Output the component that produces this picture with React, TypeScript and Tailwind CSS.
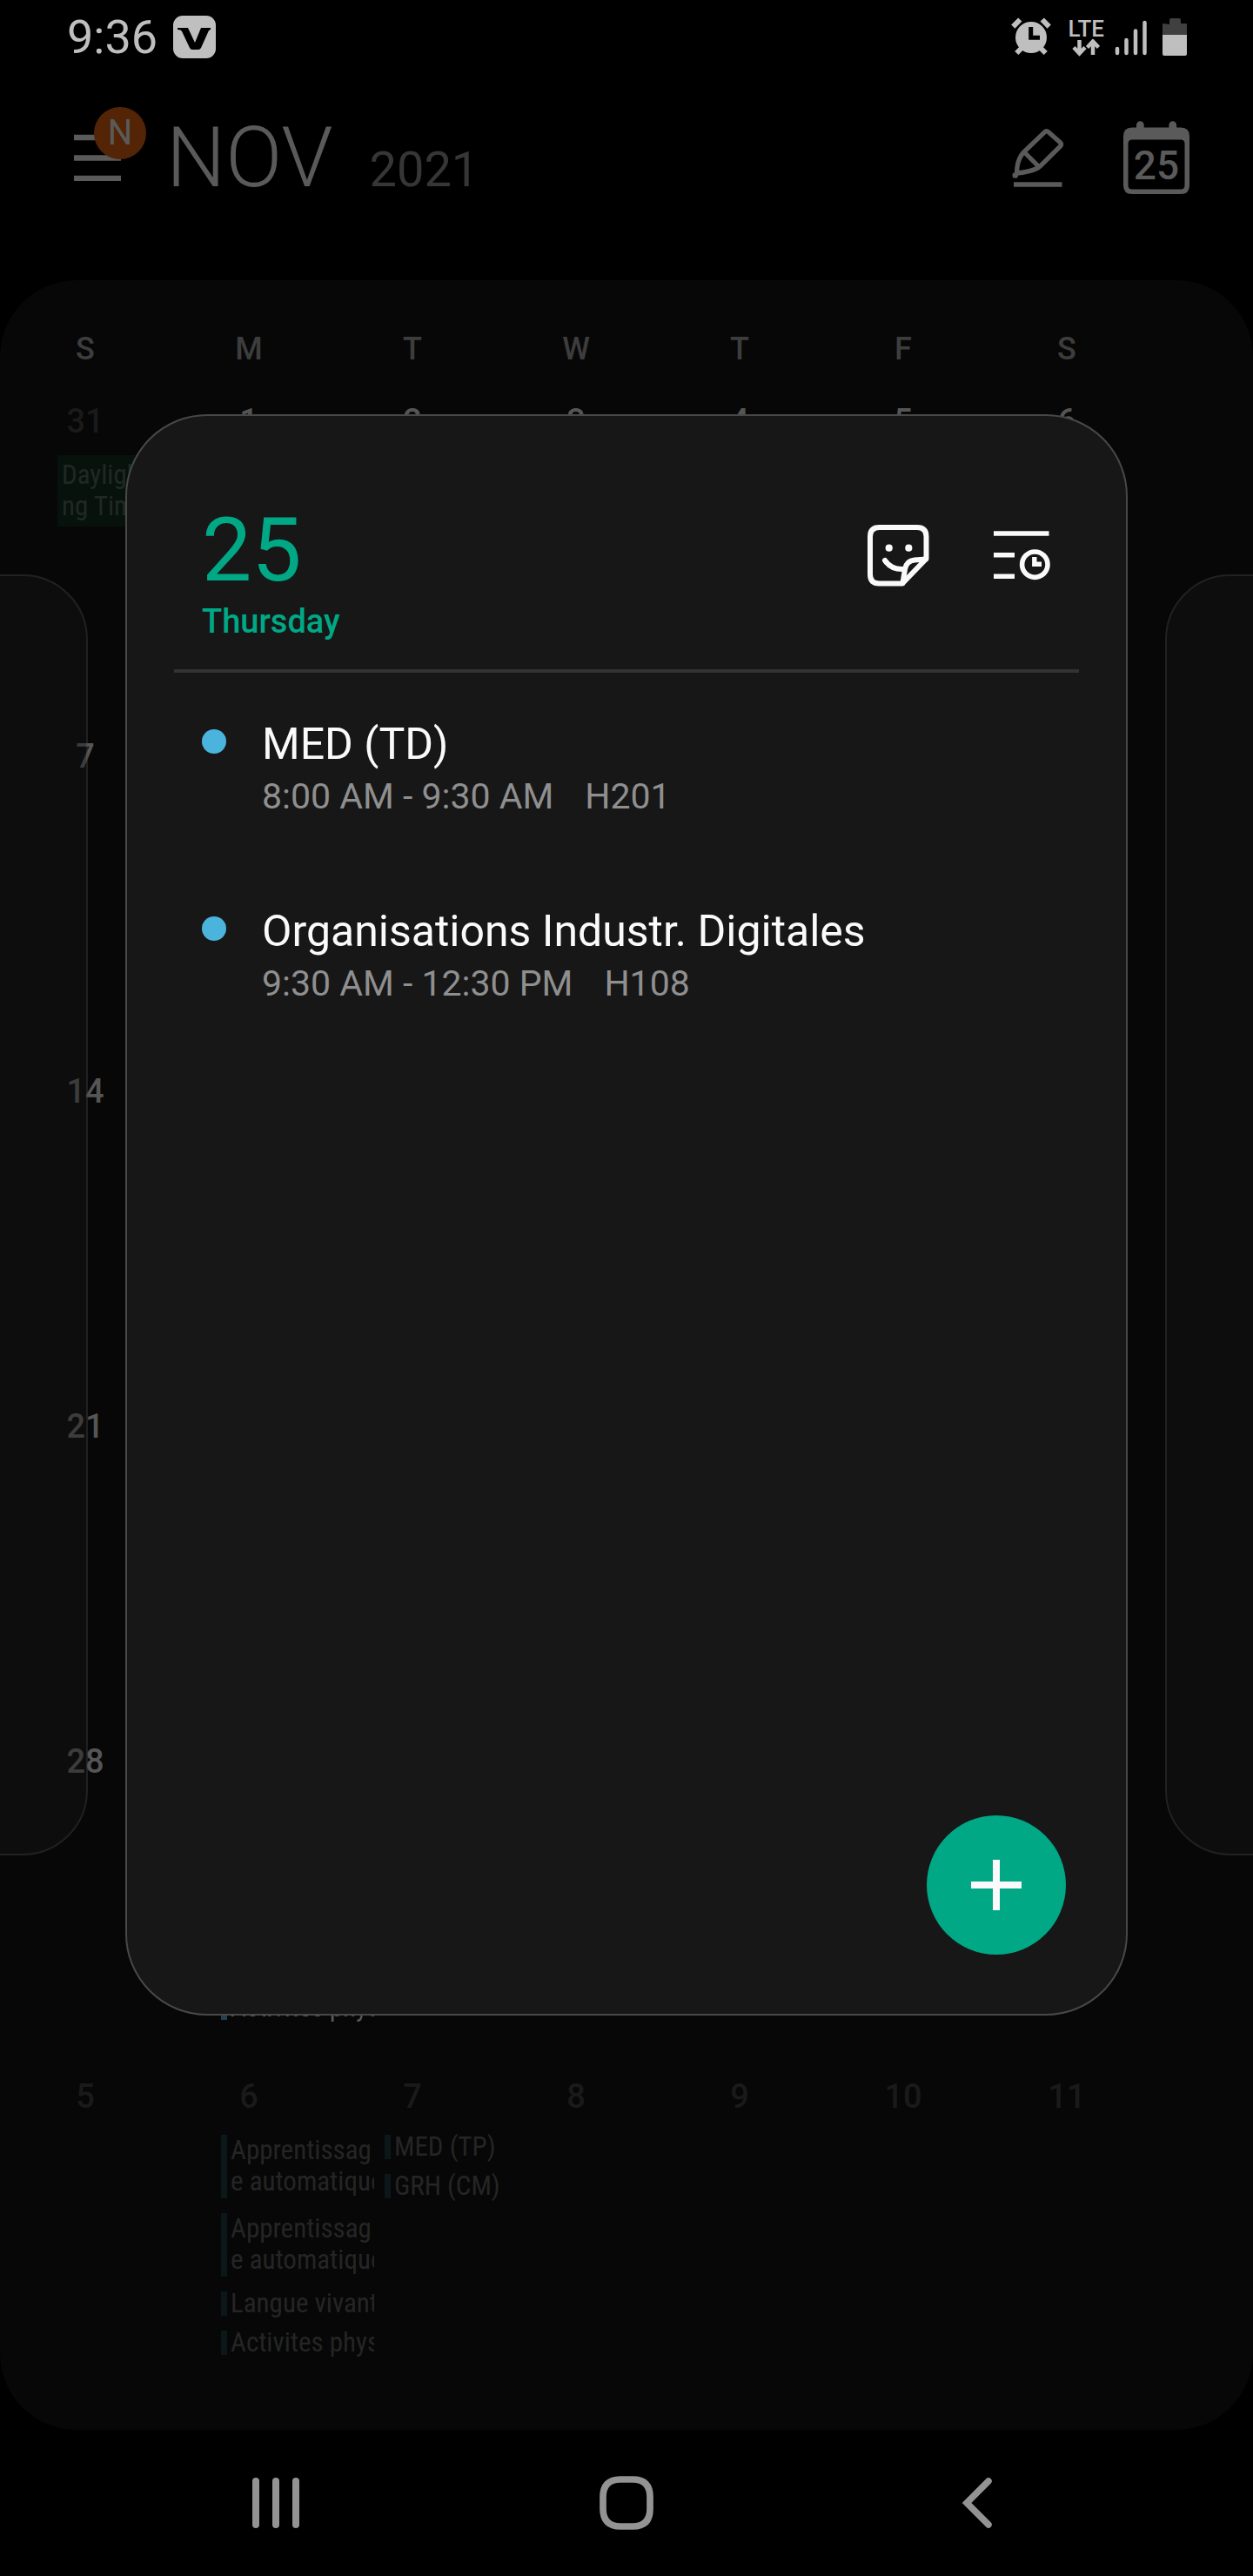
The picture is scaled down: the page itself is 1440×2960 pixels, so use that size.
type CalEvent = { lines: string[]; allDay?: boolean };
type Day = { date: number; outside?: boolean; events?: CalEvent[] };

const weekdays = ["S", "M", "T", "W", "T", "F", "S"];

const mondayEvents: CalEvent[] = [
  { lines: ["Apprentissag", "e automatique"] },
  { lines: ["Apprentissag", "e automatique"] },
  { lines: ["Langue vivante"] },
  { lines: ["Activites physiques"] },
];

const eventsByCell: Record<number, CalEvent[]> = {
  0: [{ lines: ["Daylight Savi", "ng Time ends"], allDay: true }],
  29: mondayEvents,
  36: mondayEvents,
  37: [{ lines: ["MED (TP)"] }, { lines: ["GRH (CM)"] }],
};

const weeks: Day[][] = Array.from({ length: 6 }, (_, w) =>
  Array.from({ length: 7 }, (_, d) => {
    const cell = w * 7 + d;
    const date = cell === 0 ? 31 : cell > 30 ? cell - 30 : cell;
    return { date, outside: cell === 0 || cell > 30, events: eventsByCell[cell] };
  }),
);

const agenda = [
  { title: "MED (TD)", time: "8:00 AM - 9:30 AM", place: "H201" },
  { title: "Organisations Industr. Digitales", time: "9:30 AM - 12:30 PM", place: "H108" },
];

function StatusBar() {
  return (
    <div className="flex h-[86px] items-center justify-between pl-[77px] pr-[75px] text-[#bfbfbf]">
      <div className="flex items-center gap-[18px]">
        <span className="text-[54px] leading-none">9:36</span>
        <svg width="50" height="50" viewBox="0 0 50 50" aria-label="V notification">
          <rect width="49" height="49" rx="11" fill="currentColor" />
          <path d="M5 14h12l8 17 7-17h11v2l-2 1-9 20q-1 2-3 2h-7q-2 0-3-2L10 18q-1-2-5-2z" fill="#000" />
        </svg>
      </div>
      <div className="flex items-center">
        <svg width="46" height="46" viewBox="0 0 46 46" fill="none" stroke="currentColor" aria-label="Alarm set">
          <path d="M2.3 10.7l8-8.2M35.7 2.5l8 8.2M6.3 41l7-7M39.7 41l-7-7" strokeWidth="6" />
          <circle cx="23" cy="23" r="18" fill="currentColor" stroke="none" />
          <path d="M22.7 11v12.2H33" stroke="#000" strokeWidth="5" />
        </svg>
        <div className="ml-5 flex flex-col items-center">
          <span className="text-[26px] font-medium leading-6">LTE</span>
          <svg width="32" height="20" viewBox="0 0 32 20" fill="none" stroke="currentColor" strokeWidth="4.5">
            <path d="M8.5 1v16M2 9.500l6.500 7L15 9.500" />
            <path d="M24 18V3M17.500 9.500L24 2.500l6.500 7" />
          </svg>
        </div>
        <svg className="ml-3" width="38" height="42" viewBox="0 0 38 42" stroke="currentColor" strokeWidth="4.500" strokeLinecap="round" aria-label="Signal">
          <path d="M3 34v5M13.500 24v15M24 13.500v25.500M34.500 4v35" />
        </svg>
        <svg className="ml-4" width="30" height="44" viewBox="0 0 30 44" aria-label="Battery">
          <path d="M9 7V2q0-2 2-2h9q2 0 2 2v4h6q1 0 1 1v12H1V7q0-1 1-1z" fill="#404040" />
          <path d="M1 19h28v22q0 2-2 2H3q-2 0-2-2z" fill="currentColor" />
        </svg>
      </div>
    </div>
  );
}

function AppBar() {
  return (
    <header className="mb-[46px] flex h-[190px] items-center justify-between pl-[85px] pr-[73px] text-[#5a5a5a]">
      <div className="flex items-center">
        <button type="button" aria-label="Menu" className="relative w-[54px]">
          <svg width="54" height="54" viewBox="0 0 54 54" className="block">
            <path d="M0 4h54M0 27.500h54M0 51h54" stroke="currentColor" strokeWidth="6.500" />
          </svg>
          <span className="absolute -top-[31px] left-[23px] flex size-[60px] items-center justify-center rounded-full bg-[#542406] text-[40px]">
            N
          </span>
        </button>
        <h1 className="ml-[52px] flex items-baseline gap-[42px]">
          <span className="text-[96px] font-light leading-none">NOV</span>
          <span className="text-[56px] leading-none text-[#363636]">2021</span>
        </h1>
      </div>
      <div className="flex items-center gap-[68px]">
        <button type="button" aria-label="Draw">
          <svg width="60" height="68" viewBox="0 0 60 68" fill="none" stroke="currentColor" strokeWidth="5.300" strokeLinejoin="round" className="block">
            <path d="M37.700 4.600q2-2 4 0l13.800 12.200q2.200 2 .2 4L33 43.300q-2.500 2.500-6 4-8 3.500-21.500 4.700 0-13 5.500-21 1.500-2.200 3.500-4.200z" />
            <path d="M14.300 28l16.500 16.500" />
            <circle cx="3.800" cy="54.500" r="3.300" fill="currentColor" stroke="none" />
            <path d="M2 65h55.500" strokeWidth="5.500" />
          </svg>
        </button>
        <button type="button" aria-label="Go to today" className="relative h-[84px] w-[76px] pt-[18px] text-[46px] font-medium leading-[60px]">
          <svg width="76" height="84" viewBox="0 0 76 84" className="absolute inset-0">
            <path
              fillRule="evenodd"
              fill="currentColor"
              d="M10 7.500h5V4.500a4.300 4.300 0 0 1 8.700 0v3h28.700V4.500a4.300 4.300 0 0 1 8.700 0v3H66q10 0 10 10V74q0 10-10 10H10Q0 84 0 74V17.500q0-10 10-10zM10 21.500q-4.500 0-4.500 4.500v48q0 4.500 4.500 4.500h56q4.500 0 4.500-4.500V26q0-4.500-4.500-4.500z"
            />
          </svg>
          25
        </button>
      </div>
    </header>
  );
}

function EventItem({ event, outside }: { event: CalEvent; outside?: boolean }) {
  if (event.allDay) {
    return (
      <li className="-mt-[5px] overflow-hidden whitespace-nowrap bg-[#07120d] p-[5px] leading-9 text-[#202924]">
        {event.lines.map((line) => (
          <div key={line}>{line}</div>
        ))}
      </li>
    );
  }
  const tone = outside ? "border-[#0c1719] text-[#252525]" : "border-[#20424e] text-[#5a5a5a]";
  const height = event.lines.length > 1 ? "h-[73px] leading-9" : "h-7 leading-7";
  return (
    <li className={`border-l-[7px] pl-1 ${tone} ${height}`}>
      <div className="-my-2 overflow-hidden whitespace-nowrap py-2">
        {event.lines.map((line) => (
          <div key={line}>{line}</div>
        ))}
      </div>
    </li>
  );
}

function MonthGrid() {
  return (
    <main className="flex-1 rounded-[88px] bg-[#070707] pb-5 pl-[66px] pr-[58px] pt-[59px]">
      <table className="w-full table-fixed border-collapse">
        <thead>
          <tr>
            {weekdays.map((day, i) => (
              <th key={i} scope="col" className="p-0 pb-[41px] text-left text-[36px] font-medium leading-10 text-[#3d3d3d]">
                <div className="w-16 text-center">{day}</div>
              </th>
            ))}
          </tr>
        </thead>
        <tbody>
          {weeks.map((week, w) => (
            <tr key={w} className="h-[385px]">
              {week.map((day) => (
                <td key={day.date} className="p-0 pr-3 align-top">
                  <div className={`w-16 text-center text-[38px] font-medium leading-[44px] ${day.outside ? "text-[#1a1a1a]" : "text-[#555555]"}`}>
                    {day.date}
                  </div>
                  {day.events && (
                    <ul className="mt-[22px] flex flex-col gap-[17px] font-['Roboto_Condensed','Roboto',sans-serif] text-[31px]">
                      {day.events.map((event, i) => (
                        <EventItem key={i} event={event} outside={day.outside} />
                      ))}
                    </ul>
                  )}
                </td>
              ))}
            </tr>
          ))}
        </tbody>
      </table>
    </main>
  );
}

function DayDialog() {
  return (
    <section
      role="dialog"
      aria-label="Thursday 25"
      className="flex h-full w-4/5 shrink-0 flex-col rounded-[94px] border-2 border-[#484848] bg-[#171717]"
    >
      <div className="flex items-start justify-between pl-[86px] pr-[86px] pt-[103px]">
        <h2 className="text-[#00a885]">
          <span className="block text-[102px] leading-none">25</span>
          <span className="mt-[9px] block text-[38px] font-medium leading-[44px]">Thursday</span>
        </h2>
        <div className="mt-[22px] flex gap-[74px] text-[#fafafa]">
          <button type="button" aria-label="Add sticker">
            <svg width="71" height="71" viewBox="0 0 71 71" fill="none" stroke="currentColor" strokeWidth="6" strokeLinejoin="round" strokeLinecap="round" className="block">
              <path d="M67.500 39V13.500q0-10.500-10.500-10.500H13.500Q3 3 3 13.500v43.500Q3 67.500 13.500 67.500H40z" />
              <path d="M67 39.500l-13 1q-9.500 1-11 10.500L40.500 67" />
              <path d="M20 41q7.500 11 22 10" />
              <circle cx="24.700" cy="26.700" r="4.100" fill="currentColor" stroke="none" />
              <circle cx="47.300" cy="26.700" r="4.100" fill="currentColor" stroke="none" />
            </svg>
          </button>
          <button type="button" aria-label="Add to timeline">
            <svg width="66" height="71" viewBox="0 0 66 71" fill="none" stroke="currentColor" className="block">
              <path d="M0 10h63.500M0 34.700h24M0 59.200h24" strokeWidth="5.600" />
              <circle cx="47.300" cy="45.700" r="14.700" strokeWidth="5.600" />
              <path d="M46.800 37v8.300H55" strokeWidth="5.400" />
            </svg>
          </button>
        </div>
      </div>
      <hr className="mx-[54px] mt-[33px] border-0 border-t-4 border-[#333333]" />
      <ul className="mx-[86px] mt-[53px] flex flex-1 flex-col gap-[101px]">
        {agenda.map((item) => (
          <li key={item.title} className="flex items-start gap-[41px]">
            <span className="mt-3 size-7 shrink-0 rounded-full bg-[#4bb4dc]" />
            <div>
              <h3 className="text-[50px] leading-[58px] text-[#fafafa]">{item.title}</h3>
              <p className="mt-1.5 flex gap-9 text-[41px] leading-[50px] text-[#8f8f8f]">
                <span>{item.time}</span>
                <span>{item.place}</span>
              </p>
            </div>
          </li>
        ))}
      </ul>
      <div className="flex justify-end pb-[68px] pr-[69px]">
        <button type="button" aria-label="Add event" className="flex size-40 items-center justify-center rounded-full bg-[#00a885] text-[#fafafa]">
          <svg width="58" height="58" viewBox="0 0 58 58">
            <path d="M29 0v58M0 29h58" stroke="currentColor" strokeWidth="8" />
          </svg>
        </button>
      </div>
    </section>
  );
}

function SidePage() {
  return <div className="h-4/5 w-[64%] shrink-0 rounded-[75px] border-2 border-[#484848] bg-[#171717] opacity-40" />;
}

function NavBar() {
  return (
    <nav className="flex h-[168px] items-center justify-center gap-[342px] text-[#939393]">
      <button type="button" aria-label="Recents">
        <svg width="60" height="60" viewBox="0 0 60 60" stroke="currentColor" strokeWidth="8" strokeLinecap="round">
          <path d="M7 5v50M30 5v50M53 5v50" />
        </svg>
      </button>
      <button type="button" aria-label="Home">
        <svg width="62" height="62" viewBox="0 0 62 62" fill="none" stroke="currentColor" strokeWidth="7.700">
          <path d="M4 31v-7Q4 4 24 4h14q20 0 20 20v14q0 20-20 20H24Q4 58 4 38z" />
        </svg>
      </button>
      <button type="button" aria-label="Back">
        <svg width="60" height="60" viewBox="0 0 60 60" fill="none" stroke="currentColor" strokeWidth="7.500" strokeLinecap="round">
          <path d="M43 5L18 30l25 25" />
        </svg>
      </button>
    </nav>
  );
}

export default function App() {
  return (
    <div className="relative flex min-h-screen flex-col overflow-hidden bg-black font-['Roboto',sans-serif]">
      <StatusBar />
      <AppBar />
      <MonthGrid />
      <NavBar />
      <div className="absolute inset-x-0 bottom-[168px] top-0 flex items-center justify-center gap-[43px] overflow-hidden py-[476px]">
        <SidePage />
        <DayDialog />
        <SidePage />
      </div>
    </div>
  );
}
